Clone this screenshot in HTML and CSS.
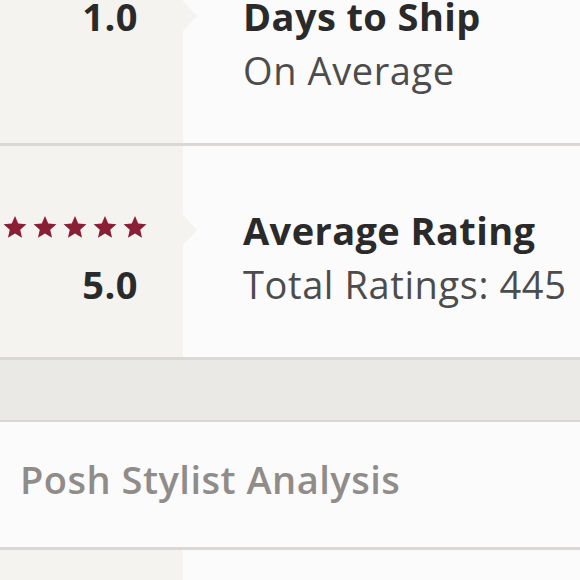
FILE: index.html
```html
<!DOCTYPE html>
<html>
<head>
<meta charset="utf-8">
<link rel="stylesheet" href="styles.css">
</head>
<body>
<div class="page">
  <div class="stat">
    <div class="stat-left">
      <div class="value">1.0</div>
    </div>
    <div class="stat-right">
      <div class="title">Days to Ship</div>
      <div class="sub">On Average</div>
    </div>
  </div>
  <div class="divider"></div>
  <div class="stat">
    <div class="stat-left">
      <div class="stars">
        <svg viewBox="0 0 24 24"><polygon points="12,1 15.23,8.55 23.41,9.29 17.23,14.7 19.05,22.71 12,18.5 4.95,22.71 6.77,14.7 0.59,9.29 8.77,8.55"/></svg>
        <svg viewBox="0 0 24 24"><polygon points="12,1 15.23,8.55 23.41,9.29 17.23,14.7 19.05,22.71 12,18.5 4.95,22.71 6.77,14.7 0.59,9.29 8.77,8.55"/></svg>
        <svg viewBox="0 0 24 24"><polygon points="12,1 15.23,8.55 23.41,9.29 17.23,14.7 19.05,22.71 12,18.5 4.95,22.71 6.77,14.7 0.59,9.29 8.77,8.55"/></svg>
        <svg viewBox="0 0 24 24"><polygon points="12,1 15.23,8.55 23.41,9.29 17.23,14.7 19.05,22.71 12,18.5 4.95,22.71 6.77,14.7 0.59,9.29 8.77,8.55"/></svg>
        <svg viewBox="0 0 24 24"><polygon points="12,1 15.23,8.55 23.41,9.29 17.23,14.7 19.05,22.71 12,18.5 4.95,22.71 6.77,14.7 0.59,9.29 8.77,8.55"/></svg>
      </div>
      <div class="value">5.0</div>
    </div>
    <div class="stat-right">
      <div class="title">Average Rating</div>
      <div class="sub">Total Ratings: 445</div>
    </div>
  </div>
  <div class="divider"></div>
  <div class="band"></div>
  <div class="divider thin"></div>
  <div class="section">
    <div class="section-title">Posh Stylist Analysis</div>
  </div>
  <div class="divider"></div>
  <div class="stat">
    <div class="stat-left"></div>
    <div class="stat-right"></div>
  </div>
</div>
</body>
</html>
```

FILE: styles.css
```css
html, body {
  margin: 0;
  padding: 0;
  background: #fcfbfb;
  overflow: hidden;
}
.page {
  margin-top: -68px;
  font-family: "Open Sans", "Noto Sans", sans-serif;
  font-size: 38px;
  line-height: 54px;
}
.stat {
  display: flex;
  background: #fcfbfb;
}
.stat-left {
  position: relative;
  width: 183px;
  flex: 0 0 183px;
  box-sizing: border-box;
  background: #f5f3f0;
  padding: 57px 45px 46px 0;
  text-align: right;
}
.stat-left::after {
  content: "";
  position: absolute;
  right: -14px;
  top: 69px;
  border-left: 14px solid #f5f3f0;
  border-top: 15px solid transparent;
  border-bottom: 15px solid transparent;
}
.stat-right {
  flex: 1;
  padding: 57px 0 46px 60px;
  min-height: 108px;
}
.value {
  font-weight: 700;
  color: #2a2a2a;
  letter-spacing: 0.5px;
}
.stars {
  display: flex;
  justify-content: flex-end;
  align-items: center;
  gap: 6px;
  height: 54px;
  margin-right: -9px;
  padding-bottom: 6px;
  box-sizing: border-box;
}
.stars svg {
  width: 24px;
  height: 24px;
  fill: #8a1e35;
}
.title {
  font-weight: 700;
  color: #2a2a2a;
  letter-spacing: 0.4px;
}
.sub {
  font-weight: 400;
  color: #4c4c4c;
  letter-spacing: 0.6px;
}
.divider {
  height: 3px;
  background: #dad7d4;
}
.divider.thin {
  height: 2px;
}
.band {
  height: 60px;
  background: #ebe9e6;
}
.section {
  background: #fcfbfb;
  padding: 30px 0 41px 20px;
}
.section-title {
  font-weight: 600;
  color: #8f8c89;
  letter-spacing: 0.5px;
}
```
